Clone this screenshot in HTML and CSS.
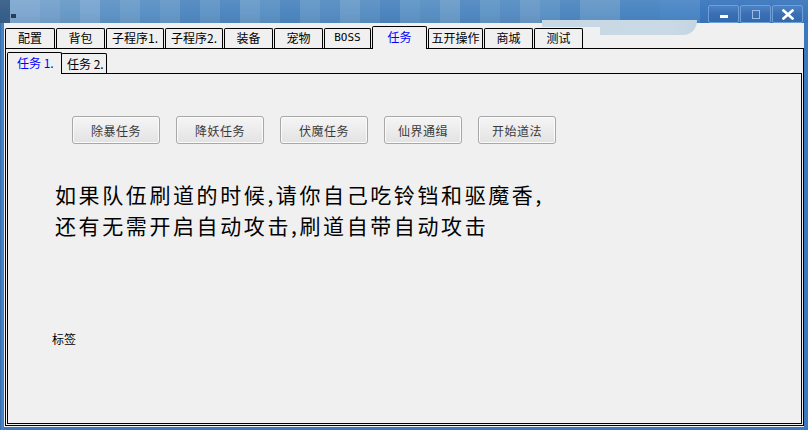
FILE: index.html
```html
<!DOCTYPE html>
<html lang="zh-CN">
<head>
<meta charset="utf-8">
<title>任务</title>
<link rel="stylesheet" href="styles.css">
</head>
<body>
<div class="window">
  <div class="titlebar">
    <div class="title-icon"></div>
    <div class="title-buttons">
      <div class="wbtn"><span class="glyph-min"></span></div>
      <div class="wbtn"><span class="glyph-max"></span></div>
      <div class="wbtn"><svg width="12" height="11" viewBox="0 0 12 11"><path d="M1.5 1.5 L10.5 9.5 M10.5 1.5 L1.5 9.5" stroke="#fff" stroke-width="2.6" stroke-linecap="square"/></svg></div>
    </div>
  </div>
  <div class="blur-blob blob-a"></div>
  <div class="blur-blob blob-b"></div>
  <div class="client">
    <div class="tabs">
      <div class="tab w50">配置</div>
      <div class="tab w49">背包</div>
      <div class="tab w58">子程序1.</div>
      <div class="tab w58">子程序2.</div>
      <div class="tab w49">装备</div>
      <div class="tab w49">宠物</div>
      <div class="tab w47 latin">BOSS</div>
      <div class="tab w55 active">任务</div>
      <div class="tab w55">五开操作</div>
      <div class="tab w49">商城</div>
      <div class="tab w49">测试</div>
    </div>
    <div class="pane">
      <div class="subtabs">
        <div class="subtab active">任务 1.</div>
        <div class="subtab">任务 2.</div>
      </div>
      <div class="subpane">
        <div class="btn-row">
          <button class="btn">除暴任务</button>
          <button class="btn">降妖任务</button>
          <button class="btn">伏魔任务</button>
          <button class="btn narrow">仙界通缉</button>
          <button class="btn narrow">开始道法</button>
        </div>
        <div class="notice">
          <div class="notice-line">如果队伍刷道的时候,请你自己吃铃铛和驱魔香,</div>
          <div class="notice-line">还有无需开启自动攻击,刷道自带自动攻击</div>
        </div>
        <div class="label">标签</div>
      </div>
    </div>
  </div>
</div>
</body>
</html>
```
FILE: styles.css
```css
* { box-sizing: border-box; }
html, body {
  margin: 0;
  padding: 0;
  width: 808px;
  height: 430px;
  overflow: hidden;
  background: #3a74b8;
  font-family: "Noto Sans CJK SC", "Liberation Sans", sans-serif;
}
.window {
  position: relative;
  width: 808px;
  height: 430px;
  display: flex;
  flex-direction: column;
  background: linear-gradient(to right, #2f66a8 0, #4c87c6 2px, #3b78bd 4px);
}
.titlebar {
  position: relative;
  height: 23px;
  flex: none;
  background:
    linear-gradient(to bottom, rgba(255,255,255,0.05) 0, rgba(255,255,255,0) 12px, rgba(0,0,0,0.05) 23px),
    linear-gradient(to right,
      #39608a 0, #39608a 10px,
      #80a9d1 10px, #80a9d1 40px,
      #75a2cd 40px, #75a2cd 60px,
      #6a9bc8 60px, #6a9bc8 80px,
      #7aa6d0 80px, #7aa6d0 100px,
      #5f94c6 100px, #5f94c6 120px,
      #6c9dca 120px, #6c9dca 140px,
      #5b91c5 140px, #5b91c5 160px,
      #6699c8 160px, #6699c8 180px,
      #5189c1 180px, #5189c1 200px,
      #6196c7 200px, #6196c7 220px,
      #4f88c0 220px, #4f88c0 240px,
      #6a9bc9 240px, #6a9bc9 260px,
      #5c92c5 260px, #5c92c5 280px,
      #4e87c0 280px, #4e87c0 300px,
      #6397c7 300px, #6397c7 320px,
      #568dc3 320px, #568dc3 340px,
      #6b9cca 340px, #6b9cca 360px,
      #5a90c4 360px, #5a90c4 380px,
      #4d86bf 380px, #4d86bf 400px,
      #6096c7 400px, #6096c7 420px,
      #5990c4 420px, #5990c4 440px,
      #6b9cc9 440px, #6b9cc9 460px,
      #5289c1 460px, #5289c1 480px,
      #6297c7 480px, #6297c7 500px,
      #578ec3 500px, #578ec3 520px,
      #6a9ac8 520px, #6a9ac8 540px,
      #5d93c6 540px, #5d93c6 560px,
      #4f88c0 560px, #4f88c0 580px,
      #6598c8 580px, #6598c8 620px,
      #4b86c2 620px, #4b86c2 660px,
      #4d88c6 660px, #4d88c6 700px,
      #3c78bd 700px);
}
.title-icon {
  position: absolute;
  left: 11px;
  top: 14px;
  width: 5px;
  height: 4px;
  background: #2a3d55;
}
.title-buttons {
  position: absolute;
  right: 5px;
  top: 5px;
  display: flex;
  gap: 1px;
}
.wbtn {
  width: 31px;
  height: 18px;
  border: 1px solid #6e9fd8;
  border-radius: 2px;
  background: linear-gradient(to bottom, #4d83c4 0, #3a70b3 50%, #336aad 100%);
  display: flex;
  align-items: center;
  justify-content: center;
}
.glyph-min {
  display: block;
  width: 8px;
  height: 3px;
  background: #fff;
  margin-top: 5px;
}
.glyph-max {
  display: block;
  width: 8px;
  height: 9px;
  border: 1px solid #9bbbe0;
}
.blur-blob {
  position: absolute;
  background: #c8d8e5;
  z-index: 5;
}
.blob-a {
  left: 542px;
  top: 20px;
  width: 60px;
  height: 7px;
}
.blob-b {
  left: 600px;
  top: 20px;
  width: 97px;
  height: 15px;
  border-radius: 0 0 14px 0;
  background: linear-gradient(to right, #c8d8e5 0, #cad9e5 70%, #c4d5e3 100%);
}
.client {
  flex: 1;
  margin: 0 4px 3px 4px;
  background: #f0f0f0;
  display: flex;
  flex-direction: column;
  color: #000;
}
.tabs {
  height: 25px;
  flex: none;
  display: flex;
  align-items: flex-end;
  gap: 1px;
  padding-left: 1px;
  position: relative;
  z-index: 2;
}
.tab {
  height: 20px;
  border: 1px solid #000;
  border-bottom: none;
  border-radius: 2px 2px 0 0;
  background: #f0f0f0;
  font-size: 12px;
  line-height: 18px;
  text-align: center;
  white-space: nowrap;
}
.tab.latin {
  font-family: "DejaVu Sans Mono", "Liberation Mono", monospace;
  font-size: 11px;
}
.tab.active {
  height: 23px;
  margin-bottom: -1px;
  color: #0000ff;
  line-height: 20px;
}
.w47 { width: 47px; }
.w49 { width: 49px; }
.w50 { width: 50px; }
.w55 { width: 55px; }
.w58 { width: 58px; }
.pane {
  margin-left: 1px;
  width: 799px;
  height: 378px;
  border: 1px solid #000;
  padding: 0 1px 1px 1px;
  display: flex;
  flex-direction: column;
  background: #f0f0f0;
}
.subtabs {
  height: 24px;
  flex: none;
  display: flex;
  align-items: flex-end;
  position: relative;
  z-index: 2;
}
.subtab {
  height: 20px;
  border: 1px solid #000;
  border-bottom: none;
  border-radius: 2px 2px 0 0;
  background: #f0f0f0;
  font-size: 12px;
  line-height: 19px;
  padding: 0 6px 0 5px;
  width: 46px;
  white-space: nowrap;
  margin-left: -1px;
}
.subtab.active {
  width: 55px;
  height: 22px;
  margin-left: 0;
  margin-bottom: -1px;
  color: #0000ff;
  padding-left: 9px;
  position: relative;
  z-index: 1;
}
.subpane {
  width: 795px;
  height: 351px;
  border: 1px solid #000;
  padding: 42px 0 0 64px;
  background: #f0f0f0;
}
.btn-row {
  display: flex;
  gap: 16px;
}
.btn {
  width: 88px;
  height: 28px;
  border: 1px solid #a7a7a7;
  border-radius: 3px;
  background: linear-gradient(to bottom, #f5f5f5 0, #ececec 50%, #e2e2e2 100%);
  box-shadow: inset 0 0 0 1px #fbfbfb;
  font-family: "Noto Sans CJK SC", sans-serif;
  font-size: 12px;
  color: #3a3a3a;
  padding: 0;
  letter-spacing: 0.5px;
}
.btn.narrow { width: 78px; }
.notice {
  margin: 35px 0 0 -17px;
  display: flex;
  flex-direction: column;
}
.notice-line {
  font-size: 21px;
  line-height: 30.5px;
  height: 30.5px;
  letter-spacing: 2.6px;
  color: #000;
  white-space: nowrap;
}
.label {
  margin: 92px 0 0 -20px;
  font-size: 12px;
  line-height: 14px;
}
```
